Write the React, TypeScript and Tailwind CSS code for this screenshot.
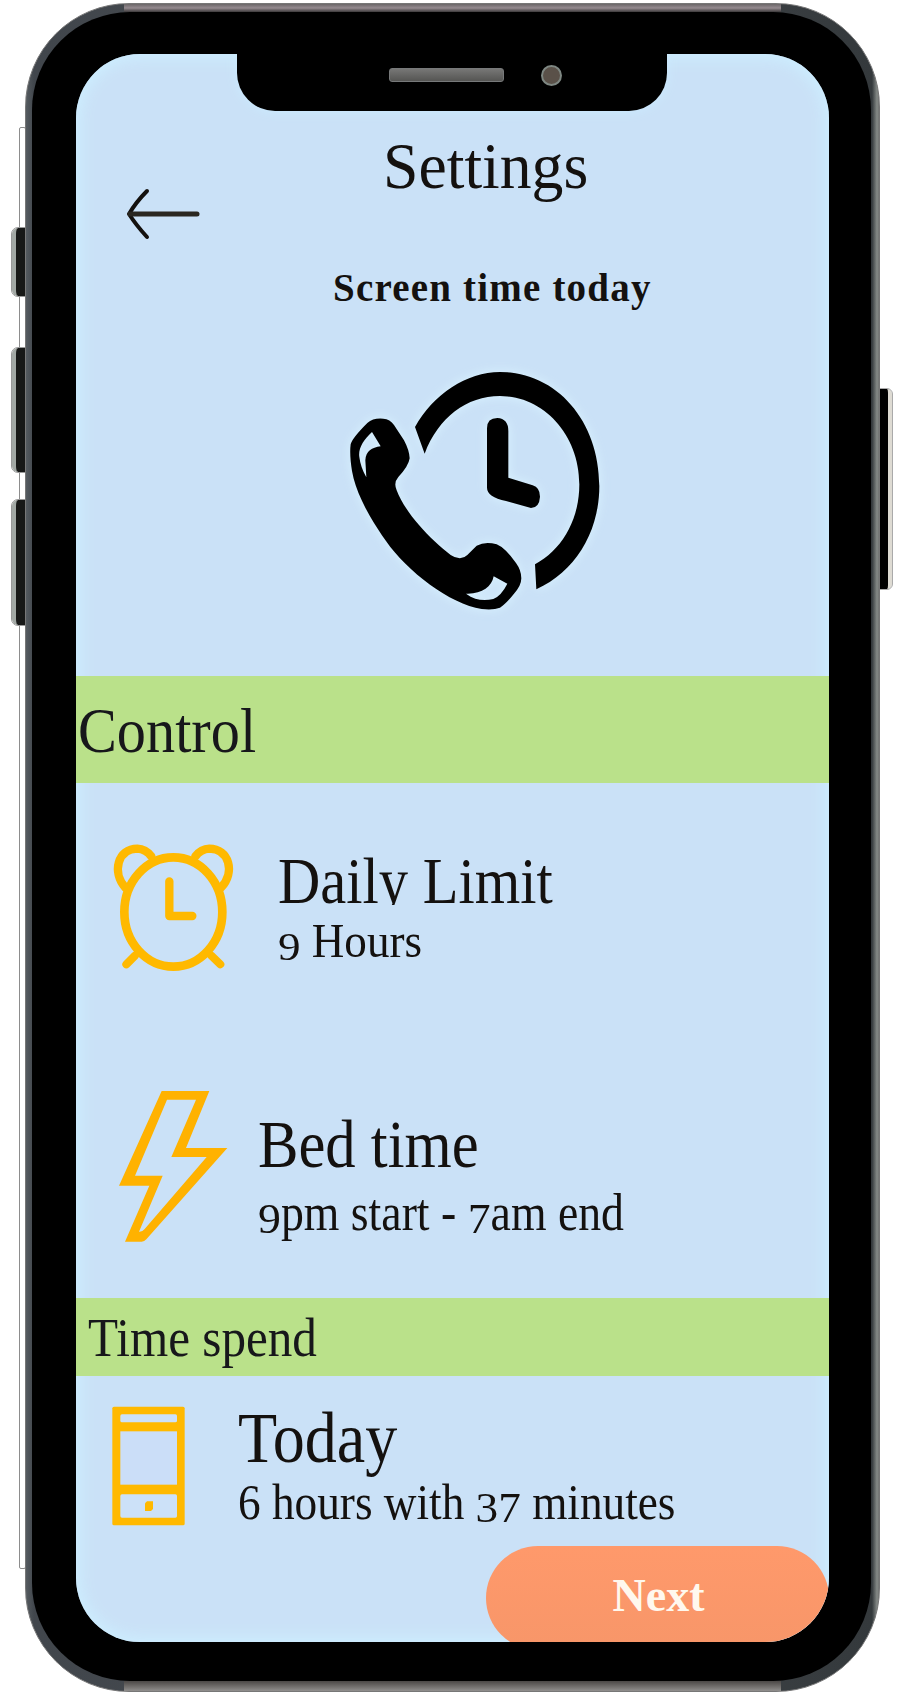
import React from "react";

function BackArrow() {
  return (
    <svg width="76" height="52" viewBox="0 0 76 52" fill="none" stroke="#14110f" strokeLinecap="round" strokeLinejoin="round">
      <path d="M23 3 Q12 14 5 26 Q12 37 23 49" strokeWidth="4" />
      <path d="M6 26 H73" strokeWidth="5" stroke="#2a2721" />
    </svg>
  );
}

function CallHistoryIcon() {
  return (
    <svg width="300" height="280" viewBox="0 0 900 840" className="drop-shadow-[0_0_6px_#d9f3ff]">
      <path d="M255 228 C310 130 410 63 510 63 C680 63 808 210 808 405 C808 545 735 662 619 715 L615 640 C695 597 748 508 748 400 C748 250 640 135 510 135 C410 135 325 200 284 308 Z" />
      <path d="M471 232 Q471 201 502 201 Q535 203 535 240 V380 L608 403 Q630 410 630 437 Q628 470 603 471 L528 450 Q471 438 471 410 Z" />
      <path
        fillRule="evenodd"
        d="M62 280 Q66 262 112 216 Q130 200 160 203 Q180 204 192 222 L222 268 Q238 298 239 322 Q236 345 205 378 Q190 395 200 418 C225 485 300 565 362 612 Q392 632 412 612 L440 584 Q465 571 500 580 Q525 590 558 636 Q574 658 574 682 Q574 704 552 728 Q530 756 510 770 Q490 778 455 774 C360 760 230 660 168 570 C125 510 78 430 66 360 Q58 310 62 280 Z
        M126 243 C100 266 84 294 88 318 Q92 350 109 379 L106 328 C108 300 125 290 152 286 Z
        M491 676 C485 708 455 730 408 728 C435 748 462 750 490 744 Q514 734 532 698 Z"
      />
    </svg>
  );
}

function AlarmIcon() {
  return (
    <svg width="140" height="145" viewBox="0 0 420 435" fill="none" stroke="#ffb900" strokeLinecap="round">
      <ellipse cx="205" cy="231" rx="147" ry="164" strokeWidth="26" />
      <path d="M61 158 C20 112 38 41 97 41 Q122 42 139 64" strokeWidth="25" />
      <path d="M348 158 C392 112 372 41 313 41 Q288 42 271 64" strokeWidth="25" />
      <path d="M193 139 V243 H262" strokeWidth="25" strokeLinejoin="round" />
      <path d="M90 362 L64 388 M319 362 L346 388" strokeWidth="24" />
    </svg>
  );
}

function BoltIcon() {
  return (
    <svg width="130" height="170" viewBox="0 0 390 510" fill="#ffb200" fillRule="evenodd">
      <path d="M170 33 H313 L243 204 H367 L124 478 Q118 485 110 485 H60 L133 317 H42 Z M186 59 L90 287 H173 L102 455 Q112 456 119 447 L305 231 H199 L273 59 Z" />
    </svg>
  );
}

function PhoneIcon() {
  return (
    <svg width="100" height="140" viewBox="0 0 300 420" fill="#ffb900">
      <rect x="22" y="35" width="217" height="356" rx="5" />
      <rect x="46" y="58" width="170" height="24" rx="5" fill="#cce1f8" />
      <rect x="46" y="109" width="170" height="160" fill="#cbdef8" />
      <rect x="46" y="298" width="170" height="70" rx="5" fill="#cce1f8" />
      <path d="M120 325 L126 319 H144 V342 L138 348 H120 Z" />
    </svg>
  );
}

function OldStyle({ children }: { children: string }) {
  return <span className="inline-block origin-bottom translate-y-[0.03em] scale-y-[0.83]">{children}</span>;
}

function SideButton({ className, right = false }: { className: string; right?: boolean }) {
  return (
    <div
      className={
        (right
          ? "rounded-r-[5px] border-r-[4px] border-r-[#dedbd3] outline-1 outline-[#aaa] bg-black "
          : "rounded-l-[6px] border-l-[4px] border-l-[#a2a8a4] outline-1 outline-[#999] bg-[#171817] ") +
        "absolute " +
        className
      }
    />
  );
}

export default function App() {
  return (
    <div className="relative h-[1692px] w-[904px] overflow-hidden bg-white pl-[25px] pt-[3px] font-['Liberation_Serif',serif] text-[#14110f]">
      <div className="absolute left-[19px] top-[127px] h-[1442px] w-[7px] rounded-[2px] border border-[#8d8d8d] bg-white" />
      <SideButton className="left-[12px] top-[228px] h-[68px] w-[14px]" />
      <SideButton className="left-[12px] top-[348px] h-[124px] w-[14px]" />
      <SideButton className="left-[12px] top-[500px] h-[125px] w-[14px]" />
      <SideButton right className="left-[880px] top-[389px] h-[200px] w-[12px]" />

      <div className="relative h-[1689px] w-[855px] rounded-[104px] border border-[#777] bg-[linear-gradient(90deg,#555b60_0,#41464c_8px,#484c50_50%,#34393c_846px,#858a87_851px,#5a5a5a_855px)] pb-[10px] pl-[6px] pr-[8px] pt-[8px]">
        <div className="absolute left-[98px] top-0 h-[8px] w-[657px] bg-gradient-to-b from-[#6b6668] via-[#958b90] to-[#3d3a3b]" />
        <div className="absolute bottom-0 left-[98px] h-[10px] w-[657px] bg-gradient-to-b from-[#4b4846] to-[#918f8d]" />
        <div className="relative h-full w-full rounded-[98px] bg-black pl-[44px] pt-[42px]">
          <main className="relative flex h-[1588px] w-[753px] flex-col overflow-hidden rounded-[64px] bg-[#cae1f7] shadow-[inset_0_0_16px_4px_#cdefff]">
            <div className="absolute left-[161px] top-0 flex h-[57px] w-[430px] rounded-b-[38px] bg-black pl-[152px] pt-[14px] shadow-[0_0_12px_#cbecff]">
              <div className="h-[14px] w-[115px] rounded-[3px] border border-[#77797a] bg-gradient-to-b from-[#777776] to-[#555553]" />
              <div className="-mt-[3px] ml-[37px] h-[21px] w-[21px] rounded-full border-2 border-[#7e8782] bg-[#5a5149]" />
            </div>

            <header className="h-[622px] shrink-0 pt-[79px]">
              <div className="flex">
                <div className="w-[257px] pl-[48px] pt-[55px]">
                  <BackArrow />
                </div>
                <div className="whitespace-nowrap">
                  <h1 className="ml-[50px] origin-left scale-x-[0.965] text-[66px] leading-[66px]">Settings</h1>
                  <p className="mt-[69px] text-[39px] font-bold leading-[40px] tracking-[1.2px]">Screen time today</p>
                </div>
              </div>
              <div className="ml-[254px] mt-[43px]">
                <CallHistoryIcon />
              </div>
            </header>

            <h2 className="h-[107px] shrink-0 bg-[#bae18a] pl-[2px] pt-[24px] text-[63px] leading-[63px] text-[#17171b]">
              <span className="inline-block origin-left scale-x-[0.925]">Control</span>
            </h2>

            <section className="flex h-[250px] shrink-0">
              <div className="w-[202px] pl-[29px] pt-[52px]">
                <AlarmIcon />
              </div>
              <div className="whitespace-nowrap pt-[65px]">
                <h3 className="h-[57px] origin-left scale-x-[0.887] overflow-hidden text-[66px] leading-[66px]">Daily Limit</h3>
                <p className="mt-[11px] origin-left scale-x-[0.92] text-[49px] leading-[49px]">
                  <OldStyle>9</OldStyle> Hours
                </p>
              </div>
            </section>

            <section className="flex h-[265px] shrink-0">
              <div className="w-[182px] pl-[29px] pt-[47px]">
                <BoltIcon />
              </div>
              <div className="whitespace-nowrap pt-[78px]">
                <h3 className="origin-left scale-x-[0.905] text-[67px] leading-[67px]">Bed time</h3>
                <p className="mt-[9px] origin-left scale-x-[0.88] text-[52px] leading-[52px]">
                  <OldStyle>9</OldStyle>pm start - <OldStyle>7</OldStyle>am end
                </p>
              </div>
            </section>

            <h2 className="h-[78px] shrink-0 bg-[#bae18a] pl-[12px] pt-[13px] text-[54px] leading-[54px] text-[#17171b]">
              <span className="inline-block origin-left scale-x-[0.91]">Time spend</span>
            </h2>

            <section className="flex h-[170px] shrink-0">
              <div className="w-[162px] pl-[29px] pt-[19px]">
                <PhoneIcon />
              </div>
              <div className="whitespace-nowrap pt-[26px]">
                <h3 className="origin-left scale-x-[0.89] text-[72px] leading-[72px]">Today</h3>
                <p className="mt-[3px] origin-left scale-x-[0.905] text-[50px] leading-[50px]">
                  6 hours with <OldStyle>37</OldStyle> minutes
                </p>
              </div>
            </section>

            <button className="ml-[410px] flex h-[104px] w-[343px] shrink-0 justify-center rounded-full bg-gradient-to-b from-[#ff996b] to-[#f79669] pl-[2px] pt-[27px] text-[46px] font-bold leading-[46px] text-[#fff8ee]">
              Next
            </button>
          </main>
        </div>
      </div>
    </div>
  );
}
